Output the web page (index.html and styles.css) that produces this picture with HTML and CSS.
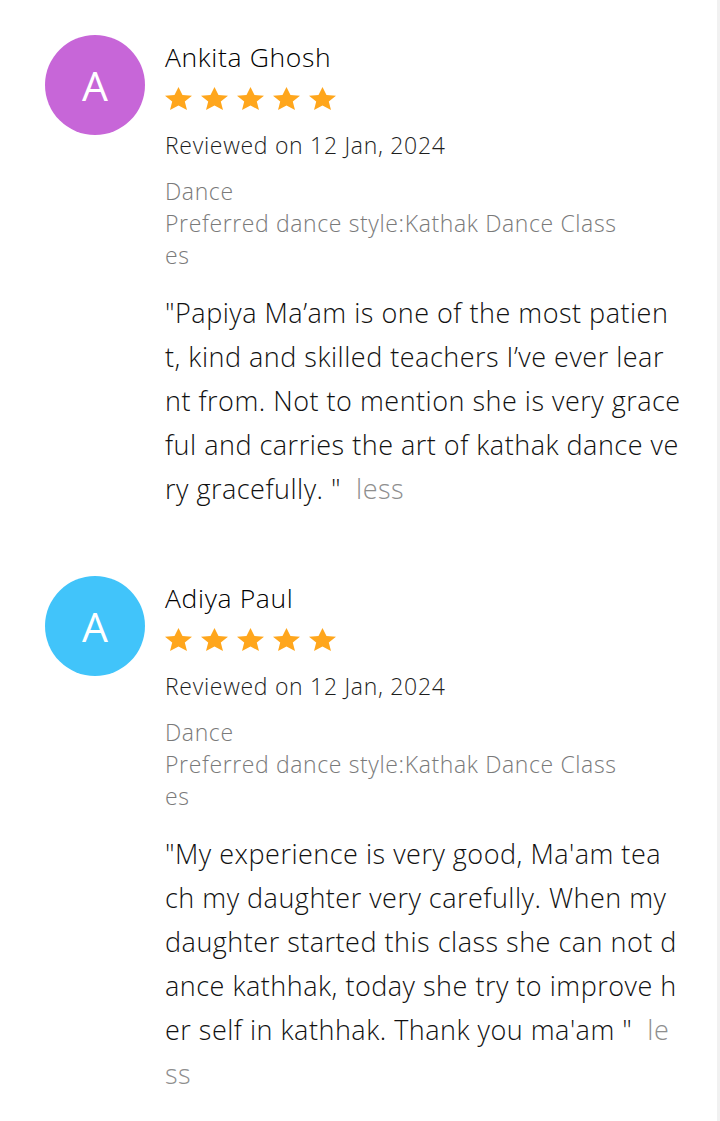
FILE: index.html
```html
<!DOCTYPE html>
<html>
<head>
<meta charset="utf-8">
<link rel="stylesheet" href="styles.css">
</head>
<body>
<div class="page">
  <div class="review">
    <div class="avatar purple">A</div>
    <div class="content">
      <div class="name">Ankita Ghosh</div>
      <div class="stars">
        <svg viewBox="1.5 1.5 21 20" preserveAspectRatio="none"><path d="M12 1.5l3.1 6.9 7.4.7-5.6 5 1.7 7.4L12 17.6l-6.6 3.9 1.7-7.4-5.6-5 7.4-.7z"/></svg>
        <svg viewBox="1.5 1.5 21 20" preserveAspectRatio="none"><path d="M12 1.5l3.1 6.9 7.4.7-5.6 5 1.7 7.4L12 17.6l-6.6 3.9 1.7-7.4-5.6-5 7.4-.7z"/></svg>
        <svg viewBox="1.5 1.5 21 20" preserveAspectRatio="none"><path d="M12 1.5l3.1 6.9 7.4.7-5.6 5 1.7 7.4L12 17.6l-6.6 3.9 1.7-7.4-5.6-5 7.4-.7z"/></svg>
        <svg viewBox="1.5 1.5 21 20" preserveAspectRatio="none"><path d="M12 1.5l3.1 6.9 7.4.7-5.6 5 1.7 7.4L12 17.6l-6.6 3.9 1.7-7.4-5.6-5 7.4-.7z"/></svg>
        <svg viewBox="1.5 1.5 21 20" preserveAspectRatio="none"><path d="M12 1.5l3.1 6.9 7.4.7-5.6 5 1.7 7.4L12 17.6l-6.6 3.9 1.7-7.4-5.6-5 7.4-.7z"/></svg>
      </div>
      <div class="date">Reviewed on 12 Jan, 2024</div>
      <div class="meta">
        <span class="line">Dance</span>
        <span class="line">Preferred dance style:Kathak Dance Class</span>
        <span class="line">es</span>
      </div>
      <div class="text">
        <span class="line">"Papiya Ma’am is one of the most patien</span>
        <span class="line">t, kind and skilled teachers I’ve ever lear</span>
        <span class="line">nt from. Not to mention she is very grace</span>
        <span class="line">ful and carries the art of kathak dance ve</span>
        <span class="line">ry gracefully. "  <span class="less">less</span></span>
      </div>
    </div>
  </div>

  <div class="review second">
    <div class="avatar blue">A</div>
    <div class="content">
      <div class="name">Adiya Paul</div>
      <div class="stars">
        <svg viewBox="1.5 1.5 21 20" preserveAspectRatio="none"><path d="M12 1.5l3.1 6.9 7.4.7-5.6 5 1.7 7.4L12 17.6l-6.6 3.9 1.7-7.4-5.6-5 7.4-.7z"/></svg>
        <svg viewBox="1.5 1.5 21 20" preserveAspectRatio="none"><path d="M12 1.5l3.1 6.9 7.4.7-5.6 5 1.7 7.4L12 17.6l-6.6 3.9 1.7-7.4-5.6-5 7.4-.7z"/></svg>
        <svg viewBox="1.5 1.5 21 20" preserveAspectRatio="none"><path d="M12 1.5l3.1 6.9 7.4.7-5.6 5 1.7 7.4L12 17.6l-6.6 3.9 1.7-7.4-5.6-5 7.4-.7z"/></svg>
        <svg viewBox="1.5 1.5 21 20" preserveAspectRatio="none"><path d="M12 1.5l3.1 6.9 7.4.7-5.6 5 1.7 7.4L12 17.6l-6.6 3.9 1.7-7.4-5.6-5 7.4-.7z"/></svg>
        <svg viewBox="1.5 1.5 21 20" preserveAspectRatio="none"><path d="M12 1.5l3.1 6.9 7.4.7-5.6 5 1.7 7.4L12 17.6l-6.6 3.9 1.7-7.4-5.6-5 7.4-.7z"/></svg>
      </div>
      <div class="date">Reviewed on 12 Jan, 2024</div>
      <div class="meta">
        <span class="line">Dance</span>
        <span class="line">Preferred dance style:Kathak Dance Class</span>
        <span class="line">es</span>
      </div>
      <div class="text">
        <span class="line">"My experience is very good, Ma'am tea</span>
        <span class="line">ch my daughter very carefully. When my</span>
        <span class="line">daughter started this class she can not d</span>
        <span class="line">ance kathhak, today she try to improve h</span>
        <span class="line">er self in kathhak. Thank you ma'am "  <span class="less">le</span></span>
        <span class="line"><span class="less">ss</span></span>
      </div>
    </div>
  </div>
</div>
</body>
</html>
```

FILE: styles.css
```css
html, body {
  margin: 0;
  padding: 0;
  background: #ffffff;
}
body {
  font-family: "Open Sans", Lato, sans-serif;
  font-weight: 300;
  width: 720px;
  height: 1121px;
  overflow: hidden;
}
.page {
  height: 1121px;
  border-right: 3px solid #f1f1f1;
  box-sizing: border-box;
  padding-top: 35px;
}
.review {
  display: flex;
  align-items: flex-start;
  padding-left: 45px;
  gap: 20px;
}
.review.second {
  margin-top: 65px;
}
.avatar {
  width: 100px;
  height: 100px;
  border-radius: 50%;
  flex: none;
  display: flex;
  align-items: center;
  justify-content: center;
  color: #ffffff;
  font-weight: 400;
  font-size: 41px;
  line-height: 1;
}
.avatar.purple { background: #c766d8; }
.avatar.blue { background: #41c4fa; }
.content {
  padding-top: 2px;
  flex: 1;
}
.name {
  font-size: 26.5px;
  line-height: 40px;
  letter-spacing: 0.65px;
  color: #000000;
}
.stars {
  display: flex;
  gap: 9px;
  height: 23px;
  margin-top: 10px;
  margin-bottom: 19px;
}
.stars svg {
  width: 27px;
  height: 23px;
  fill: #ffa61c;
}
.date {
  font-size: 23px;
  line-height: 32px;
  letter-spacing: 0.7px;
  color: #1e1e1e;
}
.meta {
  margin-top: 14px;
  font-size: 23px;
  line-height: 32px;
  letter-spacing: 0.62px;
  color: #7a7a7a;
}
.line {
  display: block;
  white-space: pre;
}
.text {
  margin-top: 20px;
  font-size: 27px;
  line-height: 44px;
  letter-spacing: 0.5px;
  color: #111111;
}
.less {
  color: #8e8e8e;
}
```
